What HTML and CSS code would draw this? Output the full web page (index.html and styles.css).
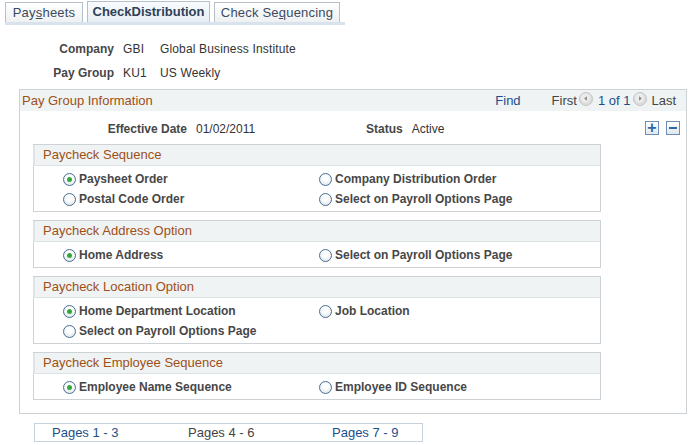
FILE: index.html
```html
<!DOCTYPE html>
<html lang="en">
<head>
    <meta charset="UTF-8">
    <title>CheckDistribution</title>
    <link rel="stylesheet" href="styles.css">
</head>
<body>
    <div class="tabs">
        <div class="tab tab-first">Pay<u>s</u>heets</div>
        <div class="tab tab-active">CheckDistribution</div>
        <div class="tab tab-last">Check Se<u>q</u>uencing</div>
    </div>

    <div class="keyinfo">
        <span class="label">Company</span><span class="code">GBI</span><span>Global Business Institute</span>
        <span class="label">Pay Group</span><span class="code">KU1</span><span>US Weekly</span>
    </div>

    <div class="scroll-box">
        <div class="scroll-head">
            <span class="box-title">Pay Group Information</span>
            <div class="scroll-nav">
                <a class="link find">Find</a>
                <span>First</span>
                <svg class="arrow prev" width="14" height="14" viewBox="0 0 15 15">
                    <circle cx="7.5" cy="7.5" r="7" fill="#dcdcdc" stroke="#c4c4c4"/>
                    <circle cx="7" cy="6.5" r="5" fill="#ececec"/>
                    <path d="M5.5 7 L8.5 4.5 L8.5 9.5 Z" fill="#8a8a8a"/>
                </svg>
                <a class="link">1 of 1</a>
                <svg class="arrow next" width="14" height="14" viewBox="0 0 15 15">
                    <circle cx="7.5" cy="7.5" r="7" fill="#dcdcdc" stroke="#c4c4c4"/>
                    <circle cx="7" cy="6.5" r="5" fill="#ececec"/>
                    <path d="M9.5 7 L6.5 4.5 L6.5 9.5 Z" fill="#8a8a8a"/>
                </svg>
                <span>Last</span>
            </div>
        </div>

        <div class="eff-row">
            <span class="label eff-label">Effective Date</span>
            <span class="eff-value">01/02/2011</span>
            <span class="label">Status</span>
            <span class="status-value">Active</span>
            <div class="row-buttons">
                <span class="row-btn">+</span>
                <span class="row-btn minus"></span>
            </div>
        </div>

        <div class="group-box">
            <div class="group-head">Paycheck Sequence</div>
            <div class="options">
                <label class="radio"><span class="dot on"></span>Paysheet Order</label>
                <label class="radio"><span class="dot"></span>Company Distribution Order</label>
                <label class="radio"><span class="dot"></span>Postal Code Order</label>
                <label class="radio"><span class="dot"></span>Select on Payroll Options Page</label>
            </div>
        </div>

        <div class="group-box">
            <div class="group-head">Paycheck Address Option</div>
            <div class="options">
                <label class="radio"><span class="dot on"></span>Home Address</label>
                <label class="radio"><span class="dot"></span>Select on Payroll Options Page</label>
            </div>
        </div>

        <div class="group-box">
            <div class="group-head">Paycheck Location Option</div>
            <div class="options">
                <label class="radio"><span class="dot on"></span>Home Department Location</label>
                <label class="radio"><span class="dot"></span>Job Location</label>
                <label class="radio"><span class="dot"></span>Select on Payroll Options Page</label>
            </div>
        </div>

        <div class="group-box">
            <div class="group-head">Paycheck Employee Sequence</div>
            <div class="options">
                <label class="radio"><span class="dot on"></span>Employee Name Sequence</label>
                <label class="radio"><span class="dot"></span>Employee ID Sequence</label>
            </div>
        </div>
    </div>

    <div class="pager">
        <a class="link">Pages 1 - 3</a>
        <span>Pages 4 - 6</span>
        <a class="link">Pages 7 - 9</a>
    </div>
</body>
</html>
```

FILE: styles.css
```css
body {
    margin: 0;
    padding: 0;
    background-color: #fff;
    font-family: 'Liberation Sans', Arial, sans-serif;
    font-size: 12px;
    color: #333;
}

.link {
    color: #1b4f8a;
    cursor: pointer;
}

.label {
    font-weight: bold;
    color: #474747;
}

/* Tabs */
.tabs {
    display: flex;
    gap: 4px;
    width: 340px;
    margin: 2px 0 0 5px;
    border-bottom: 3px solid #d8e3ee;
}

.tab {
    box-sizing: border-box;
    height: 20px;
    line-height: 19px;
    border: 1px solid #b4c0cc;
    border-bottom: none;
    background: linear-gradient(#ffffff, #eef0f2);
    font-size: 13px;
    color: #3b4a5e;
    text-align: center;
    white-space: nowrap;
    letter-spacing: 0.2px;
}

.tab-first {
    width: 78px;
}

.tab-active {
    width: 123px;
    margin-top: -1px;
    height: 21px;
    font-weight: bold;
    color: #2f3f55;
    background: linear-gradient(#f9fbfd, #e7eef5);
    letter-spacing: 0;
}

.tab-last {
    width: 126px;
}

/* Key fields */
.keyinfo {
    display: grid;
    grid-template-columns: 114px 46px 1fr;
    grid-auto-rows: 24px;
    align-items: center;
    margin-top: 12px;
    letter-spacing: 0.15px;
}

.keyinfo .label {
    text-align: right;
    letter-spacing: 0;
}

.keyinfo .code {
    padding-left: 9px;
}

/* Scroll area */
.scroll-box {
    width: 666px;
    margin: 4px 0 0 19px;
    padding-bottom: 13px;
    border: 1px solid #cdd2d7;
}

.scroll-head {
    display: flex;
    align-items: center;
    justify-content: space-between;
    height: 21px;
    padding: 0 10px 0 2px;
    background-color: #eff3f4;
}

.box-title {
    font-size: 13px;
    color: #a04f17;
}

.scroll-nav {
    display: flex;
    align-items: center;
    font-size: 13px;
    color: #444;
}

.scroll-nav .find {
    margin-right: 31px;
}

.scroll-nav .prev {
    margin: -3px 5px 0 2px;
}

.scroll-nav .next {
    margin: -3px 4px 0 3px;
}

.eff-row {
    display: flex;
    align-items: center;
    height: 20px;
    margin-top: 8px;
}

.eff-label {
    width: 167px;
    text-align: right;
}

.eff-value {
    width: 170px;
    padding-left: 9px;
}

.status-value {
    padding-left: 9px;
}

.row-buttons {
    display: flex;
    gap: 7px;
    margin: -2px 0 0 auto;
    padding-right: 6px;
}

.row-btn {
    display: flex;
    align-items: center;
    justify-content: center;
    width: 12px;
    height: 12px;
    border: 1px solid #6f8fae;
    background: linear-gradient(#ffffff, #dfe8f0);
    color: #2d68a6;
    font-size: 16px;
    font-weight: bold;
    line-height: 12px;
}

.row-btn.minus::before {
    content: '';
    width: 8px;
    height: 2px;
    background-color: #2d68a6;
}

/* Group boxes */
.group-box {
    width: 566px;
    margin: 8px 0 0 13px;
    border: 1px solid #cdd2d7;
}

.eff-row + .group-box {
    margin-top: 5px;
}

.group-head {
    height: 20px;
    line-height: 20px;
    padding-left: 8px;
    background-color: #eff3f4;
    border-bottom: 1px solid #dde2e5;
    border-left: 2px solid #dfe3e6;
    margin-left: -1px;
    font-size: 13px;
    color: #a04f17;
}

.options {
    display: grid;
    grid-template-columns: 256px 1fr;
    grid-auto-rows: 20px;
    padding: 3px 0 2px 29px;
}

.radio {
    display: flex;
    align-items: center;
    gap: 3px;
    font-weight: bold;
    color: #474747;
}

.dot {
    display: flex;
    align-items: center;
    justify-content: center;
    width: 11px;
    height: 11px;
    border: 1px solid #4b6f92;
    border-radius: 50%;
    background: radial-gradient(circle at 50% 35%, #ffffff 30%, #d6dde4 100%);
}

.dot.on::before {
    content: '';
    width: 5px;
    height: 5px;
    border-radius: 50%;
    background-color: #35a83a;
}

/* Bottom pager */
.pager {
    display: grid;
    grid-template-columns: 136px 144px auto;
    align-items: center;
    width: 370px;
    height: 17px;
    margin: 9px 0 0 34px;
    padding-left: 17px;
    border: 1px solid #c8d2dc;
    font-size: 13px;
    color: #444;
}
```
